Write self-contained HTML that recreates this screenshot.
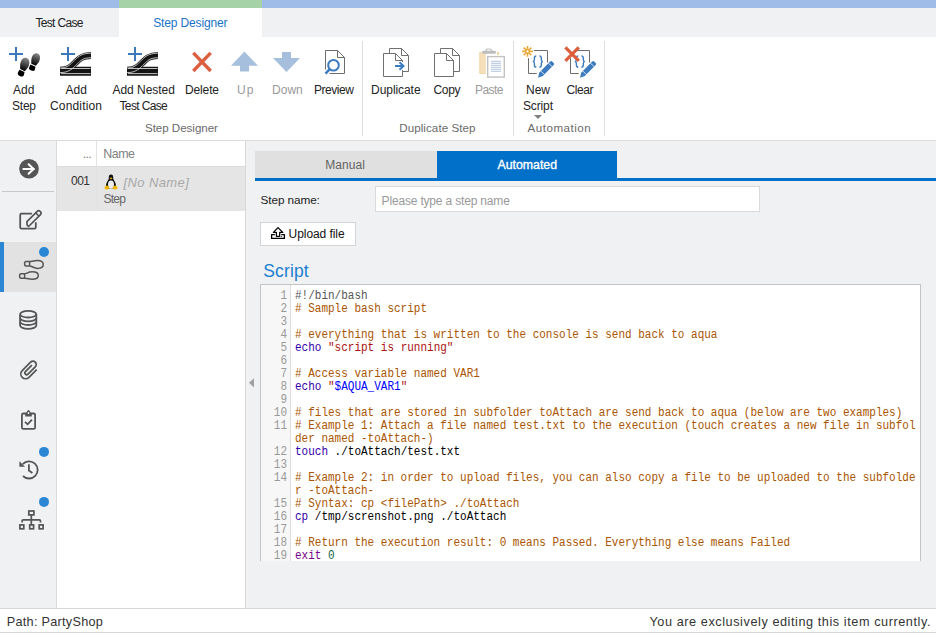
<!DOCTYPE html>
<html><head><meta charset="utf-8">
<style>
*{margin:0;padding:0;box-sizing:border-box}
html,body{width:936px;height:634px;overflow:hidden;background:#fff;font-family:"Liberation Sans",sans-serif;color:#222}
.a{position:absolute}
.t{position:absolute;white-space:nowrap;line-height:1;z-index:6}
.code{position:absolute;left:295px;font-family:"Liberation Mono",monospace;font-size:12px;line-height:13px;white-space:pre;color:#000;z-index:6;transform:scaleX(0.91667);transform-origin:0 0}
.ln{position:absolute;left:261px;width:26px;text-align:right;font-family:"Liberation Mono",monospace;font-size:12px;line-height:13px;color:#999;z-index:6;transform:scaleX(0.91667);transform-origin:100% 0}
.cm{color:#a50}.st{color:#a11}.bi{color:#30a}.df{color:#00f}.kw{color:#708}.nm{color:#164}.mt{color:#555}
</style></head><body>

<div class="a" style="left:0;top:0;width:936px;height:8px;background:#9fbbe7"></div>
<div class="a" style="left:119px;top:0;width:143px;height:8px;background:#a6d2a8"></div>
<div class="a" style="left:0;top:8px;width:936px;height:29px;background:#f0f1f3"></div>
<div class="a" style="left:119px;top:8px;width:143px;height:29px;background:#fff"></div>
<div class="a" style="left:0;top:140px;width:936px;height:1px;background:#dcdcdc"></div>
<div class="a" style="left:362px;top:41px;width:1px;height:95px;background:#dedede"></div>
<div class="a" style="left:513px;top:41px;width:1px;height:95px;background:#dedede"></div>
<div class="a" style="left:604px;top:41px;width:1px;height:95px;background:#dedede"></div>
<div class="a" style="left:534px;top:115px;width:0;height:0;border-left:4px solid transparent;border-right:4px solid transparent;border-top:4px solid #808080"></div>
<div class="a" style="left:0;top:141px;width:56px;height:467px;background:#f0f1f3"></div>
<div class="a" style="left:56px;top:141px;width:190px;height:467px;background:#fff;border-left:1px solid #d9d9d9;border-right:1px solid #d9d9d9"></div>
<div class="a" style="left:246px;top:141px;width:690px;height:467px;background:#f0f1f3"></div>
<div class="a" style="left:0;top:608px;width:936px;height:25px;background:#fff;border-top:1px solid #d6d6d6;border-bottom:1px solid #d6d6d6"></div>
<div class="a" style="left:57px;top:166px;width:188px;height:45px;background:#e5e5e5"></div>
<div class="a" style="left:57px;top:166px;width:188px;height:1px;background:#dcdcdc"></div>
<div class="a" style="left:96px;top:141px;width:1px;height:70px;background:#e2e2e2"></div>
<div class="a" style="left:255px;top:151px;width:182px;height:27px;background:#e0e0e0"></div>
<div class="a" style="left:437px;top:151px;width:180px;height:27px;background:#0070c9"></div>
<div class="a" style="left:255px;top:178px;width:681px;height:3px;background:#0070c9"></div>
<div class="a" style="left:375px;top:186px;width:385px;height:26px;background:#fff;border:1px solid #d9d9d9"></div>
<div class="a" style="left:260px;top:222px;width:96px;height:24px;background:#fff;border:1px solid #d4d4d4"></div>
<div class="a" style="left:260px;top:284px;width:661px;height:277px;background:#fff;border:1px solid #c4c4c4;border-bottom:none"></div>
<div class="a" style="left:261px;top:285px;width:30px;height:276px;background:#f7f7f7;border-right:1px solid #ddd"></div>
<div class="t" id="t0" style="left:35.42px;top:16.84px;font-size:12px;color:#222;letter-spacing:-0.665px;">Test Case</div>
<div class="t" id="t1" style="left:153.24px;top:16.84px;font-size:12px;color:#1a73c8;letter-spacing:-0.145px;">Step Designer</div>
<div class="t" id="t2" style="left:13.00px;top:83.84px;font-size:12px;color:#222;letter-spacing:0.030px;">Add</div>
<div class="t" id="t3" style="left:12.12px;top:99.84px;font-size:12px;color:#222;letter-spacing:-0.273px;">Step</div>
<div class="t" id="t4" style="left:65.50px;top:83.84px;font-size:12px;color:#222;letter-spacing:-0.010px;">Add</div>
<div class="t" id="t5" style="left:50.04px;top:99.84px;font-size:12px;color:#222;letter-spacing:0.157px;">Condition</div>
<div class="t" id="t6" style="left:112.46px;top:83.84px;font-size:12px;color:#222;letter-spacing:-0.031px;">Add Nested</div>
<div class="t" id="t7" style="left:119.50px;top:99.84px;font-size:12px;color:#222;letter-spacing:-0.633px;">Test Case</div>
<div class="t" id="t8" style="left:185.12px;top:83.84px;font-size:12px;color:#222;letter-spacing:-0.164px;">Delete</div>
<div class="t" id="t9" style="left:237.12px;top:83.84px;font-size:12px;color:#9a9a9a;letter-spacing:0.960px;">Up</div>
<div class="t" id="t10" style="left:272.12px;top:83.84px;font-size:12px;color:#9a9a9a;letter-spacing:-0.007px;">Down</div>
<div class="t" id="t11" style="left:314.00px;top:83.84px;font-size:12px;color:#222;letter-spacing:-0.457px;">Preview</div>
<div class="t" id="t12" style="left:145.00px;top:122.18px;font-size:11.6px;color:#6a6a6a;letter-spacing:-0.042px;">Step Designer</div>
<div class="t" id="t13" style="left:371.12px;top:83.84px;font-size:12px;color:#222;letter-spacing:-0.073px;">Duplicate</div>
<div class="t" id="t14" style="left:433.50px;top:83.84px;font-size:12px;color:#222;letter-spacing:-0.307px;">Copy</div>
<div class="t" id="t15" style="left:475.08px;top:83.84px;font-size:12px;color:#9a9a9a;letter-spacing:-0.610px;">Paste</div>
<div class="t" id="t16" style="left:399.20px;top:122.18px;font-size:11.6px;color:#6a6a6a;letter-spacing:0.075px;">Duplicate Step</div>
<div class="t" id="t17" style="left:526.12px;top:83.84px;font-size:12px;color:#222;letter-spacing:-0.060px;">New</div>
<div class="t" id="t18" style="left:523.00px;top:99.84px;font-size:12px;color:#222;letter-spacing:-0.140px;">Script</div>
<div class="t" id="t19" style="left:566.50px;top:83.84px;font-size:12px;color:#222;letter-spacing:-0.435px;">Clear</div>
<div class="t" id="t20" style="left:527.54px;top:122.18px;font-size:11.6px;color:#6a6a6a;letter-spacing:0.511px;">Automation</div>
<div class="t" id="t21" style="left:103.16px;top:147.80px;font-size:12.4px;color:#808080;letter-spacing:-0.433px;">Name</div>
<div class="t" id="t22" style="left:71.00px;top:174.84px;font-size:12px;color:#333;letter-spacing:-0.540px;">001</div>
<div class="t" id="t23" style="left:103.50px;top:192.84px;font-size:12px;color:#666;letter-spacing:-0.733px;">Step</div>
<div class="t" id="t24" style="left:325.16px;top:159.44px;font-size:12px;color:#646464;letter-spacing:0.072px;">Manual</div>
<div class="t" id="t25" style="left:497.54px;top:159.19px;font-size:12.3px;color:#fff;letter-spacing:-0.005px;-webkit-text-stroke:0.35px #fff">Automated</div>
<div class="t" id="t26" style="left:260.54px;top:194.81px;font-size:11.8px;color:#222;letter-spacing:-0.107px;">Step name:</div>
<div class="t" id="t27" style="left:381.58px;top:194.64px;font-size:12px;color:#999;letter-spacing:-0.175px;">Please type a step name</div>
<div class="t" id="t28" style="left:288.60px;top:227.94px;font-size:12px;color:#111;letter-spacing:-0.070px;">Upload file</div>
<div class="t" id="t29" style="left:263.24px;top:262.79px;font-size:17.5px;color:#1a7fd0;letter-spacing:0.144px;">Script</div>
<div class="t" id="t30" style="left:6.74px;top:616.25px;font-size:12.7px;color:#333;letter-spacing:0.271px;">Path: PartyShop</div>
<div class="t" id="t31" style="left:649.50px;top:616.25px;font-size:12.7px;color:#333;letter-spacing:0.561px;">You are exclusively editing this item currently.</div>
<div class="t" id="t32" style="left:123.42px;top:176.00px;font-size:13px;color:#a8a8a8;letter-spacing:0.408px;font-style:italic;">[No Name]</div>
<div class="t" style="left:82.8px;top:147.6px;font-size:12px;color:#808080;letter-spacing:-0.6px">...</div>
<div class="code" style="top:290px"><span class="mt">#!/bin/bash</span>
<span class="cm"># Sample bash script</span>

<span class="cm"># everything that is written to the console is send back to aqua</span>
<span class="bi">echo</span> <span class="st">"script is running"</span>

<span class="cm"># Access variable named VAR1</span>
<span class="bi">echo</span> <span class="st">"</span><span class="df">$AQUA_VAR1</span><span class="st">"</span>

<span class="cm"># files that are stored in subfolder toAttach are send back to aqua (below are two examples)</span>
<span class="cm"># Example 1: Attach a file named test.txt to the execution (touch creates a new file in subfol</span>
<span class="cm">der named -toAttach-)</span>
<span class="bi">touch</span> ./toAttach/test.txt

<span class="cm"># Example 2: in order to upload files, you can also copy a file to be uploaded to the subfolde</span>
<span class="cm">r -toAttach-</span>
<span class="cm"># Syntax: cp &lt;filePath&gt; ./toAttach</span>
<span class="bi">cp</span> /tmp/screnshot.png ./toAttach

<span class="cm"># Return the execution result: 0 means Passed. Everything else means Failed</span>
<span class="kw">exit</span> <span class="nm">0</span></div>
<div class="ln" style="top:290px">1<br>2<br>3<br>4<br>5<br>6<br>7<br>8<br>9<br>10<br>11<br>&nbsp;<br>12<br>13<br>14<br>&nbsp;<br>15<br>16<br>17<br>18<br>19</div>
<svg class="a" style="left:0;top:0;z-index:5" width="936" height="634" viewBox="0 0 936 634">
<defs>
<linearGradient id="foot" x1="0" y1="0" x2="0" y2="1"><stop offset="0" stop-color="#8a8a8a"/><stop offset="0.7" stop-color="#2a2a2a"/><stop offset="1" stop-color="#000"/></linearGradient>
<linearGradient id="track" x1="0" y1="0" x2="0" y2="1"><stop offset="0" stop-color="#444"/><stop offset="0.5" stop-color="#111"/><stop offset="1" stop-color="#333"/></linearGradient>
</defs>
<!-- Add Step -->
<g fill="#3b78b8"><rect x="9" y="53" width="14" height="2"/><rect x="15" y="47" width="2" height="14"/></g>
<g>
<g transform="translate(24.4 64.6) rotate(20)">
<path d="M0,-6.9 C3,-6.9 4.5,-4 4.5,-0.8 C4.5,2.5 3,4.5 2.6,6 L-2.4,5.6 C-3,4 -4.4,1.5 -4.4,-1.5 C-4.4,-4.5 -2.6,-6.9 0,-6.9 Z" fill="url(#foot)"/>
<path d="M-2.9,6.6 L2.7,7 L3.1,10.2 Q3.1,12.3 0,12.3 Q-3.2,12.3 -3.3,10 Z" fill="#000"/>
</g>
<g transform="translate(35.3 59.7) rotate(20)">
<path d="M0,-6.6 C2.8,-6.6 4.2,-3.8 4.2,-0.8 C4.2,2.2 2.8,4.3 2.5,5.6 L-2.3,5.2 C-2.9,3.7 -4.1,1.4 -4.1,-1.4 C-4.1,-4.3 -2.5,-6.6 0,-6.6 Z" fill="url(#foot)"/>
<path d="M-2.8,6.2 L2.6,6.6 L3,9.6 Q3,11.6 0,11.6 Q-3.1,11.6 -3.2,9.4 Z" fill="#000"/>
</g>
</g>
<!-- Add Condition -->
<g id="cond">
<g fill="#3b78b8"><rect x="61" y="53" width="14" height="2"/><rect x="67" y="47" width="2" height="14"/></g>
<path d="M60,71.25 H91" stroke="#141414" stroke-width="9"/>
<path d="M60,70.3 C67.5,70.3 71,67.2 75,63 C79,58.8 82,55.5 91,55.5" stroke="#141414" stroke-width="6.8" fill="none"/>
<path d="M61,68.5 H90.5 M61,73.6 H90.5" stroke="#e0e0e0" stroke-width="0.85"/>
<path d="M59.9,68.0 L61.8,67.9 L63.3,67.7 L64.7,67.4 L66.0,67.0 L67.1,66.5 L68.2,65.9 L69.3,65.2 L70.3,64.4 L71.3,63.5 L72.3,62.5 L73.3,61.4 L74.4,60.3 L75.5,59.2 L76.7,58.1 L77.9,57.1 L79.3,56.1 L80.8,55.3 L82.4,54.5 L84.3,54.0 L86.3,53.5 L88.5,53.3 L90.9,53.2" stroke="#e0e0e0" stroke-width="0.85" fill="none"/>
<path d="M60.1,72.6 L62.1,72.5 L64.1,72.3 L65.9,71.9 L67.6,71.3 L69.2,70.6 L70.6,69.8 L72.0,68.9 L73.2,67.9 L74.4,66.8 L75.5,65.7 L76.7,64.6 L77.7,63.5 L78.7,62.5 L79.7,61.5 L80.7,60.7 L81.7,60.0 L82.8,59.4 L84.0,58.8 L85.4,58.4 L87.0,58.1 L88.9,57.9 L91.1,57.8" stroke="#e0e0e0" stroke-width="0.85" fill="none"/>
</g>
<use href="#cond" x="67" y="0"/>
<!-- Delete -->
<path d="M193.3,52.8 L210.7,71 M210.7,52.8 L193.3,71" stroke="#dc6040" stroke-width="3.4"/>
<!-- Up / Down -->
<path d="M244.4,51.6 L258,65.7 H249 V71.6 H240 V65.7 H231 Z" fill="#a6bfdc"/>
<path d="M282,52 H291 V58 H300 L286.5,72 L273,58 H282 Z" fill="#a6bfdc"/>
<!-- Preview -->
<g fill="none" stroke="#6d6d6d" stroke-width="1">
<path d="M325.5,69.5 V50.5 H337.5 L344.5,57.5 V73.5 H329.5"/>
<path d="M337.5,50.5 V57.5 H344.5"/>
</g>
<circle cx="333.5" cy="65.3" r="5.3" fill="none" stroke="#3d7bbf" stroke-width="2"/>
<path d="M329.8,69.2 L325.5,73.7" stroke="#3d7bbf" stroke-width="2.6"/>
<!-- Duplicate -->
<g fill="none" stroke="#707070" stroke-width="1">
<path d="M389.5,53.5 V48.5 H401.5 L408.5,55.5 V71.5 H402.5"/>
<path d="M401.5,48.5 V55.5 H408.5"/>
<path d="M402.5,62 V60.5 L395.5,53.5 H383.5 V76.5 H402.5 V70"/>
<path d="M395.5,53.5 V60.5 H402.5"/>
</g>
<path d="M395,66 H403.5 M399.5,62.3 L403.5,66 L399.5,69.7" stroke="#3d7bbf" stroke-width="2" fill="none"/>
<!-- Copy -->
<g fill="none" stroke="#707070" stroke-width="1">
<path d="M440.5,53.5 V48.5 H452.5 L459.5,55.5 V71.5 H453.5"/>
<path d="M452.5,48.5 V55.5 H459.5"/>
<path d="M453.5,76.5 V60.5 L446.5,53.5 H434.5 V76.5 H453.5"/>
<path d="M446.5,53.5 V60.5 H453.5"/>
</g>
<!-- Paste -->
<path d="M479.5,52 H485.9 V73.8 H479.5 Z" fill="#f5e0bb"/>
<path d="M479.8,52 V73.5 H485.9" stroke="#efd49c" stroke-width="0.8" fill="none"/>
<rect x="497" y="52" width="2" height="3" fill="#f0d59e"/>
<rect x="482" y="50.8" width="14" height="3" rx="1.5" fill="#bcbcbc"/>
<path d="M486,51.5 V50.5 Q486,49 487.5,49 H490 Q491.5,49 491.5,50.5 V51.5" fill="none" stroke="#bcbcbc" stroke-width="1.2"/>
<rect x="487.7" y="56.6" width="16.6" height="20.5" fill="#fff" stroke="#c2c2c2" stroke-width="1.4"/>
<g stroke="#a9bfd9" stroke-width="0.9"><path d="M491,61.3 H501 M491,63.3 H501 M491,65.3 H501 M491,67.3 H501 M491,69.3 H501 M491,71.3 H501"/></g>
<!-- New Script -->
<g id="scr">
<path d="M534,50.5 H547.5 V62.5 M528.5,58.2 V73.5 H536.7" fill="none" stroke="#6d6d6d" stroke-width="1"/>
<path d="M536.3,55.9 C534.6,55.9 534.4,56.8 534.4,58.2 V59.6 C534.4,60.9 533.9,61.5 532.9,61.6 C533.9,61.7 534.4,62.3 534.4,63.6 V65 C534.4,66.4 534.6,67.3 536.3,67.3" fill="none" stroke="#3d7bbf" stroke-width="1.4"/>
<path d="M539.4,55.9 C541.1,55.9 541.3,56.8 541.3,58.2 V59.6 C541.3,60.9 541.8,61.5 542.8,61.6 C541.8,61.7 541.3,62.3 541.3,63.6 V65 C541.3,66.4 541.1,67.3 539.4,67.3" fill="none" stroke="#3d7bbf" stroke-width="1.4"/>
<path d="M538,77.8 L539.3,72.5 L550.2,61.6 Q551.2,60.6 552.2,61.6 L553.7,63.1 Q554.7,64.1 553.7,65.1 L542.8,76 Z" fill="#3d7bbf"/>
<path d="M548.6,63.2 L552.1,66.7 M540.8,71 L544.3,74.5" stroke="#fff" stroke-width="0.8"/>
</g>
<g stroke="#e8a838" stroke-width="1.6" fill="none">
<path d="M527.5,46 V56.8 M522.1,51.4 H532.9 M523.7,47.6 L531.3,55.2 M531.3,47.6 L523.7,55.2"/>
</g>
<circle cx="527.5" cy="51.4" r="2.2" fill="#e8a838"/><circle cx="527.5" cy="51.4" r="1.1" fill="#fff"/>
<!-- Clear -->
<use href="#scr" x="42" y="0"/>
<path d="M565.4,47.4 L578.8,60.8 M578.8,47.4 L565.4,60.8" stroke="#dc5f3c" stroke-width="3.2"/>
</svg>
<svg class="a" style="left:0;top:0;z-index:5" width="936" height="634" viewBox="0 0 936 634">
<!-- sidebar separator and active -->
<rect x="2" y="191" width="52" height="1" fill="#c9c9c9"/>
<rect x="0" y="242" width="56" height="50" fill="#e2e2e2"/>
<rect x="0" y="242" width="4" height="50" fill="#2b86d4"/>
<!-- arrow circle -->
<circle cx="29" cy="168.8" r="9.8" fill="#555"/>
<path d="M23.3,169 H34 M28.6,164.2 L33.6,169 L28.6,173.8" stroke="#fff" stroke-width="2" fill="none" stroke-linecap="round" stroke-linejoin="round"/>
<!-- edit -->
<path d="M31.9,213.7 H21.5 Q20.2,213.7 20.2,215 V227.3 Q20.2,228.6 21.5,228.6 H34.5 Q35.8,228.6 35.8,227.3 V222.2" fill="none" stroke="#555" stroke-width="1.8"/>
<g transform="translate(33.5 218.3) rotate(-45)">
<path d="M-9.3,2.3 V0.2 L-7,-2.3 H7.6 Q9.6,-2.3 9.6,0 Q9.6,2.3 7.6,2.3 Z" fill="none" stroke="#555" stroke-width="1.7" stroke-linejoin="round"/>
<path d="M5.4,-2.3 V2.3" stroke="#555" stroke-width="1.5"/>
</g>
<!-- footsteps -->
<circle cx="44" cy="252" r="5" fill="#2b86d4"/>
<g fill="none" stroke="#555" stroke-width="1.5" stroke-linejoin="round">
<path d="M26,261.6 H29.6 C31.5,261.6 33.5,260.6 37.5,260.6 C41.5,260.6 43.2,262.5 43.2,264.5 C43.2,266.6 41.3,268.4 37.5,268.4 C34,268.4 32,266 29.6,266 H26 C24.9,266 24.6,265 24.6,263.8 C24.6,262.6 24.9,261.6 26,261.6 Z M29.6,261.6 V266"/>
<path d="M21,273.8 H24.6 C26.5,273.8 28,271.7 32.3,271.7 C36.5,271.7 38.3,273.4 38.3,275.4 C38.3,277.5 36.4,279.2 32.3,279.2 C28.5,279.2 26.5,278.2 24.6,278.2 H21 C19.9,278.2 19.6,277.2 19.6,276 C19.6,274.8 19.9,273.8 21,273.8 Z M24.6,273.8 V278.2"/>
</g>
<!-- database -->
<g fill="none" stroke="#555" stroke-width="1.8">
<ellipse cx="28.2" cy="314.2" rx="8.1" ry="3.3"/>
<path d="M20.1,314.2 V325.5 C20.1,327.3 23.7,328.8 28.2,328.8 C32.7,328.8 36.3,327.3 36.3,325.5 V314.2"/>
<path d="M20.1,318 C20.1,319.8 23.7,321.3 28.2,321.3 C32.7,321.3 36.3,319.8 36.3,318"/>
<path d="M20.1,321.7 C20.1,323.5 23.7,325 28.2,325 C32.7,325 36.3,323.5 36.3,321.7"/>
</g>
<!-- paperclip -->
<g transform="translate(28.8 370.5) rotate(-45) scale(1.1)" fill="none" stroke="#555" stroke-width="1.55" stroke-linecap="butt">
<path d="M5.6,4.5 L-4.25,4.5 A4.35,4.35 0 0 1 -4.25,-4.2 L6.5,-4.2 A3,3 0 0 1 6.5,1.8 L-2.85,1.8 A1.65,1.65 0 0 1 -2.85,-1.5 L5.5,-1.5"/>
</g>
<!-- clipboard -->
<g fill="none" stroke="#555" stroke-width="1.8">
<rect x="21.9" y="413.5" width="13.2" height="15.4" rx="1.5"/>
<path d="M25,421.8 L27.6,424.3 L32,419.6" stroke-width="1.8"/>
</g>
<path d="M25.2,416.4 V413.6 H25.8 L27.6,410.6 Q28.5,409.5 29.4,410.6 L31.2,413.6 H31.8 V416.4 Z" fill="#555"/>
<circle cx="28.5" cy="413" r="0.95" fill="#f0f1f3"/>
<!-- history -->
<circle cx="44" cy="451.9" r="5" fill="#2b86d4"/>
<path d="M23,476 A8.6,8.6 0 1 0 22.7,464.1" fill="none" stroke="#555" stroke-width="1.8"/>
<path d="M19.4,461.3 V466.7 H25 Z" fill="#555"/>
<path d="M28.9,464.2 V470.5 L32.4,473" fill="none" stroke="#555" stroke-width="1.8"/>
<!-- network -->
<circle cx="44" cy="501.9" r="5" fill="#2b86d4"/>
<g fill="none" stroke="#555" stroke-width="1.7">
<rect x="28.8" y="511" width="5.1" height="3.9"/>
<path d="M31.3,514.9 V524.5 M22.1,522.5 V521 Q22.1,519.8 23.3,519.8 H39.3 Q40.5,519.8 40.5,521 V522.5"/>
<rect x="19.9" y="524.9" width="3.9" height="3.9"/>
<rect x="29.7" y="524.9" width="3.9" height="3.9"/>
<rect x="39.2" y="524.9" width="3.9" height="3.9"/>
</g>
<!-- splitter triangle -->
<path d="M249,382.8 L254,378.3 V387.4 Z" fill="#a0a0a0"/>
<!-- penguin -->
<g>
<path d="M111,174.5 C109.4,174.5 108.7,175.8 108.8,177.4 C108.9,178.6 108.5,179.6 107.6,181 C106.5,182.7 105.8,184.6 106,186.6 L108,188.6 L114,188.6 L116,186.6 C116.2,184.6 115.5,182.7 114.4,181 C113.5,179.6 113.1,178.6 113.2,177.4 C113.3,175.8 112.6,174.5 111,174.5 Z" fill="#111"/>
<ellipse cx="111" cy="184.6" rx="3" ry="4.2" fill="#ececec"/>
<path d="M109.5,177.9 Q111,177.3 112.5,177.9 L111,179.4 Z" fill="#f0b400"/>
<path d="M104.6,187 Q106,184.6 108.2,186 L109.6,188.2 Q107.2,190.2 104.8,189 Z" fill="#f2b600"/>
<path d="M117.4,187 Q116,184.6 113.8,186 L112.4,188.2 Q114.8,190.2 117.2,189 Z" fill="#f2b600"/>
</g>
<!-- upload icon -->
<g fill="none" stroke="#000" stroke-width="1.3" stroke-linejoin="round">
<path d="M276.4,236.3 V232.4 H273.4 L278,227.6 L282.8,232.4 H279.7 V236.3 Z"/>
<path d="M274.8,234.6 H271.6 V238.4 H284.4 V234.6 H281.3"/>
</g>
<circle cx="281.6" cy="236.5" r="0.5" fill="#000"/>
</svg>
</body></html>
